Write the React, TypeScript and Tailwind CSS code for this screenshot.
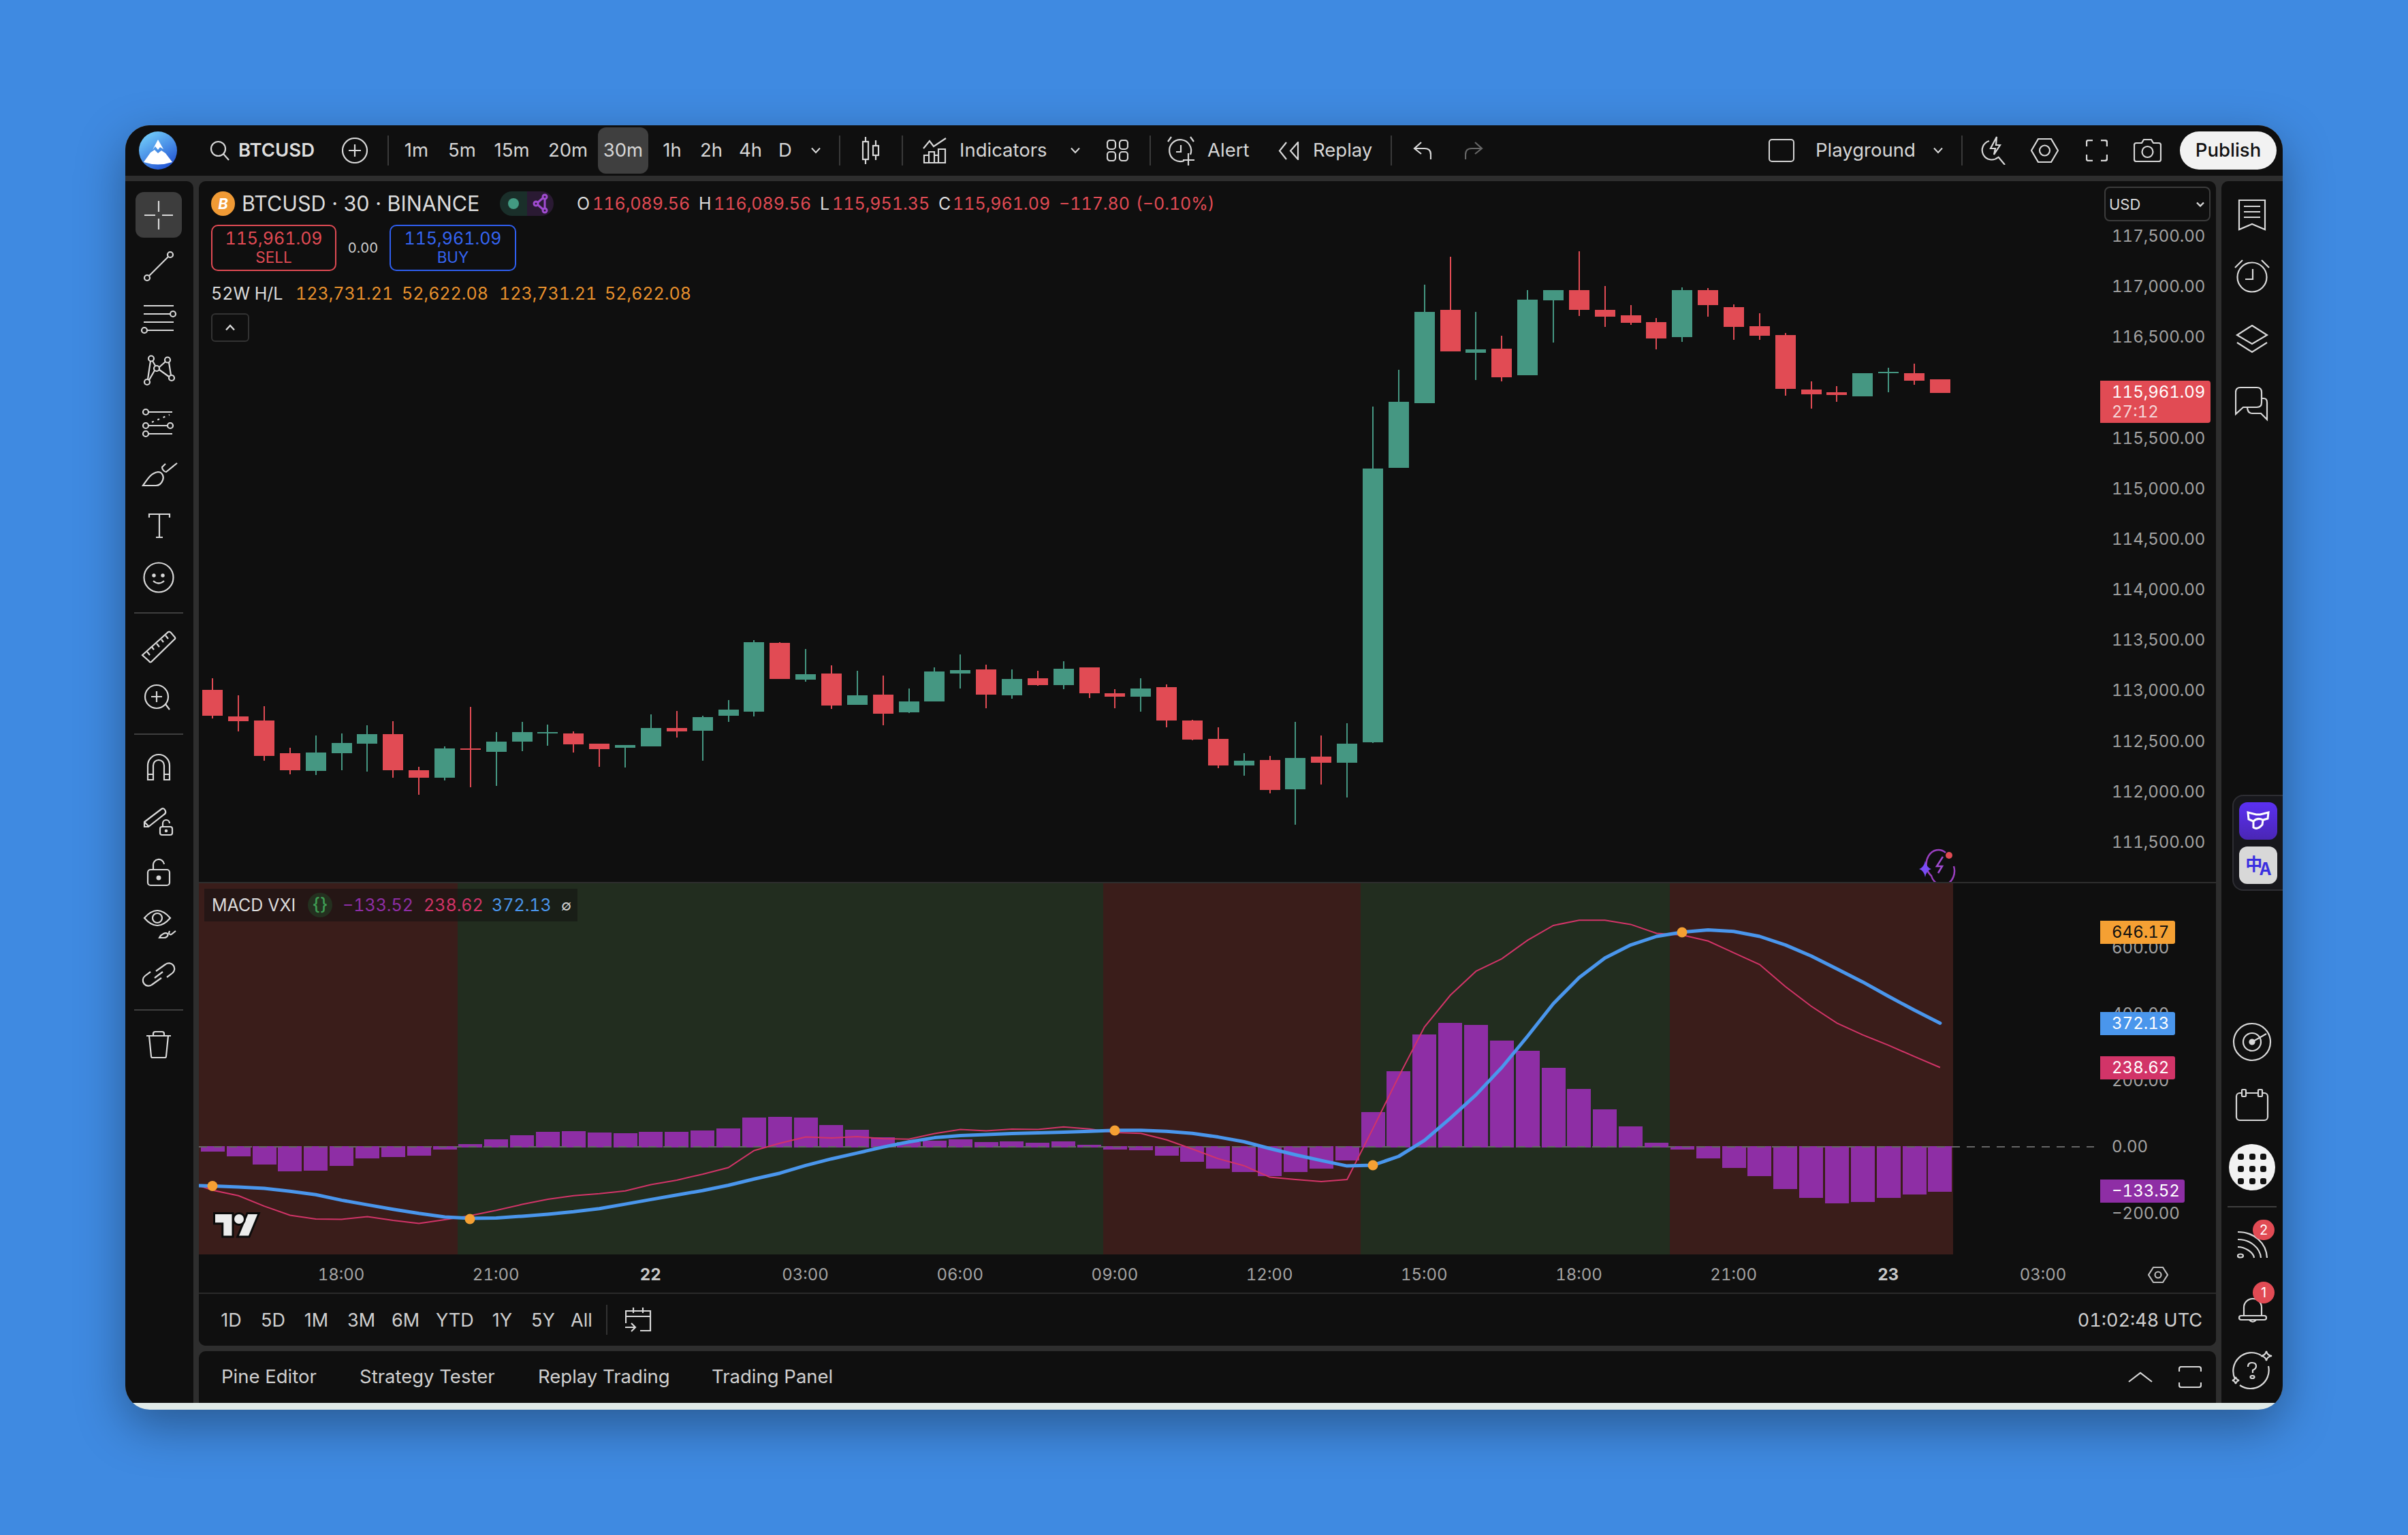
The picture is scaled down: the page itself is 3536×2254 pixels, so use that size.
import React from "react";

const CX = (i: number) => 312.3 + 37.86 * i;
const GREEN = "#459782";
const RED = "#e14b54";

// [green?, wickTop, bodyTop, bodyBottom, wickBottom]
const CANDLES: number[][] = [
  [0, 996, 1013, 1051, 1055], [0, 1021, 1052, 1059, 1074], [0, 1037, 1058, 1110, 1117], [0, 1098, 1106, 1131, 1137],
  [1, 1080, 1105, 1132, 1138], [1, 1077, 1091, 1106, 1131], [1, 1065, 1078, 1092, 1133], [0, 1059, 1078, 1131, 1142],
  [0, 1126, 1131, 1142, 1167], [1, 1096, 1099, 1142, 1146], [0, 1038, 1099, 1101, 1156], [1, 1075, 1089, 1104, 1154],
  [1, 1060, 1075, 1089, 1103], [1, 1064, 1075, 1077, 1095], [0, 1074, 1077, 1093, 1105], [0, 1092, 1092, 1100, 1126],
  [1, 1094, 1094, 1098, 1127], [1, 1049, 1069, 1096, 1096], [0, 1044, 1069, 1074, 1083], [1, 1051, 1053, 1073, 1117],
  [1, 1028, 1042, 1051, 1060], [1, 940, 943, 1045, 1052], [0, 943, 944, 997, 997], [1, 953, 990, 998, 1001],
  [0, 977, 989, 1036, 1041], [1, 985, 1021, 1035, 1035], [0, 992, 1020, 1048, 1065], [1, 1011, 1030, 1046, 1047],
  [1, 980, 986, 1030, 1030], [1, 961, 984, 989, 1011], [0, 976, 983, 1020, 1040], [1, 983, 997, 1021, 1026],
  [0, 985, 996, 1006, 1007], [1, 971, 982, 1006, 1012], [0, 980, 980, 1018, 1025], [0, 1012, 1018, 1023, 1040],
  [1, 996, 1011, 1023, 1045], [0, 1005, 1009, 1058, 1068], [0, 1057, 1058, 1086, 1087], [0, 1068, 1085, 1124, 1128],
  [1, 1106, 1117, 1124, 1139], [0, 1110, 1116, 1160, 1165], [1, 1060, 1113, 1159, 1211], [0, 1080, 1111, 1120, 1152],
  [1, 1062, 1092, 1120, 1171], [1, 597, 688, 1090, 1091], [1, 543, 590, 687, 687], [1, 418, 458, 592, 592],
  [0, 377, 455, 516, 516], [1, 458, 513, 518, 558], [0, 493, 512, 554, 560], [1, 426, 440, 551, 551],
  [1, 426, 426, 441, 503], [0, 369, 426, 455, 464], [0, 420, 455, 465, 480], [0, 448, 463, 474, 477],
  [0, 467, 473, 497, 513], [1, 422, 426, 495, 502], [0, 423, 426, 448, 465], [0, 447, 451, 480, 499],
  [0, 460, 479, 493, 499], [0, 489, 492, 571, 581], [0, 560, 572, 579, 600], [0, 567, 576, 580, 590],
  [1, 548, 548, 582, 582], [1, 540, 546, 548, 576], [0, 534, 548, 559, 565], [0, 557, 557, 577, 577],
];

const HIST = [
  1691, 1698, 1710, 1720, 1719, 1712, 1701, 1699, 1697, 1688, 1680, 1673, 1667, 1662, 1661, 1663, 1664, 1662, 1662, 1660,
  1657, 1641, 1640, 1641, 1652, 1659, 1670, 1677, 1675, 1673, 1677, 1676, 1678, 1676, 1681, 1688, 1689, 1697, 1706, 1716,
  1721, 1727, 1721, 1716, 1704, 1633, 1573, 1519, 1502, 1505, 1528, 1543, 1568, 1599, 1629, 1654, 1678, 1688, 1701, 1715,
  1727, 1746, 1759, 1767, 1765, 1759, 1754, 1750,
];

const BLUE_A = [885, 888, 892, 900, 910, 926, 939, 952, 964, 974, 978, 977, 972, 966, 959, 950, 937, 924, 911, 898, 883, 865, 848, 826, 807, 790, 773, 758, 746, 740, 737, 734, 732, 730];
const BLUE_B = [970, 966, 966, 970, 978, 992, 1010, 1036, 1060, 1082, 1103, 1100, 1066, 1005, 920, 830, 725, 605, 480, 380, 305, 255, 222, 206, 197, 203, 222, 255, 297, 347, 397, 452, 505, 555];
const RED_A = [897, 913, 943, 969, 980, 981, 973, 984, 993, 982, 970, 955, 938, 923, 913, 907, 899, 881, 868, 851, 832, 783, 762, 744, 747, 743, 749, 750, 734, 722, 726, 721, 722, 715];
const RED_B = [961, 975, 978, 1003, 1038, 1075, 1102, 1146, 1155, 1163, 1155, 960, 760, 570, 448, 356, 308, 237, 180, 160, 160, 176, 210, 217, 240, 285, 330, 415, 490, 555, 600, 640, 683, 725];

const line = (a: number[], b: number[], startY: number) => {
  const pts = [`292,${startY}`];
  a.forEach((v, i) => pts.push(`${CX(i).toFixed(1)},${(1290 + v / 1.96).toFixed(1)}`));
  b.forEach((v, i) => pts.push(`${CX(i + 34).toFixed(1)},${(1290 + v / 2.613).toFixed(1)}`));
  return pts.join(" ");
};

const Ic = ({ w = 56, h = 56, className = "", stroke = "#d9d9d9", sw = 2.2, children }: { w?: number; h?: number; className?: string; stroke?: string; sw?: number; children?: React.ReactNode }) => (
  <svg width={w} height={h} viewBox={`0 0 ${w} ${h}`} fill="none" stroke={stroke} strokeWidth={sw} className={"shrink-0 " + className}>
    {children}
  </svg>
);

const Sep = ({ className = "" }: { className?: string }) => <div className={"w-[2px] h-[44px] bg-[#3a3a3a] shrink-0 " + className} />;
const HSep = ({ className = "" }: { className?: string }) => <div className={"h-[2px] w-[72px] mx-auto bg-[#3f3f3f] shrink-0 " + className} />;
const Chev = ({ className = "" }: { className?: string }) => (
  <Ic w={16} h={10} sw={2} className={className}><path d="M2 1.5 L8 8 L14 1.5" /></Ic>
);

function TopBar() {
  const t = "text-[27.5px] text-[#d6d6d6] whitespace-nowrap text-center shrink-0 leading-none";
  return (
    <div className="h-[74px] bg-[#0f0f0f] flex items-center shrink-0">
      <svg width="56" height="56" viewBox="0 0 56 56" className="ml-[20px] shrink-0">
        <defs>
          <linearGradient id="lg" x1="0.2" y1="0" x2="0.8" y2="1">
            <stop offset="0" stopColor="#74d0fb" />
            <stop offset="1" stopColor="#1f4fd2" />
          </linearGradient>
        </defs>
        <circle cx="28" cy="28" r="28" fill="url(#lg)" />
        <path d="M28 12 L36 26 L31 23 L28 27 L24 22 L20 27 Z" fill="#fff" />
        <path d="M17 31 L23 27 L28 32 L33 28 L39 32 L49 45 Q28 52 7 45 Z" fill="#fff" />
      </svg>
      <Ic w={29} h={30} className="ml-[48px]"><circle cx="12.5" cy="12.5" r="10.5" /><path d="M20 20 L28 29" /></Ic>
      <span className="ml-[12px] w-[114px] text-[27.5px] font-semibold text-[#dedede] whitespace-nowrap text-center shrink-0 leading-none">BTCUSD</span>
      <Ic w={38} h={38} className="ml-[39px]"><circle cx="19" cy="19" r="18" /><path d="M19 10 V28 M10 19 H28" /></Ic>
      <Sep className="ml-[29px]" />
      <span className={t + " ml-[21px] w-[39px]"}>1m</span>
      <span className={t + " ml-[27px] w-[38px]"}>5m</span>
      <span className={t + " ml-[28px] w-[55px]"}>15m</span>
      <span className={t + " ml-[26px] w-[57px]"}>20m</span>
      <div className="ml-[16px] w-[74px] h-[68px] rounded-[12px] bg-[#3f3f3f] flex items-center justify-center shrink-0 text-[27.5px] text-[#d6d6d6] leading-none">30m</div>
      <span className={t + " ml-[20px] w-[30px]"}>1h</span>
      <span className={t + " ml-[26px] w-[32px]"}>2h</span>
      <span className={t + " ml-[25px] w-[32px]"}>4h</span>
      <span className={t + " ml-[26px] w-[18px]"}>D</span>
      <Chev className="ml-[29px]" />
      <Sep className="ml-[26px]" />
      <Ic w={27} h={40} className="ml-[31px]">
        <path d="M6 0 V7 M6 33 V40 M21 5 V13 M21 27 V34" />
        <rect x="2" y="7" width="8" height="26" />
        <rect x="17" y="13" width="8" height="14" />
      </Ic>
      <Sep className="ml-[32px]" />
      <Ic w={35} h={38} className="ml-[29px]">
        <path d="M1 16 L10 5 L16 13 L34 1" />
        <path d="M2 37 V26 H9 V37 M9 37 V21 H17 V37 M17 37 V26 H23 V37 M23 37 V17 H33 V37 H1" />
      </Ic>
      <span className={t + " ml-[19px] w-[126px]"}>Indicators</span>
      <Chev className="ml-[36px]" />
      <Ic w={32} h={32} className="ml-[38px]">
        <rect x="1" y="1" width="12" height="13" rx="4" /><rect x="19" y="1" width="12" height="13" rx="4" />
        <rect x="1" y="18" width="12" height="13" rx="4" /><rect x="19" y="18" width="12" height="13" rx="4" />
      </Ic>
      <Sep className="ml-[31px]" />
      <Ic w={42} h={44} className="ml-[23px]">
        <path d="M35 28 A16 16 0 1 0 26 37 " />
        <path d="M21 14 V24 H14" />
        <path d="M2 9 L7 2 M40 9 L35 2" />
        <path d="M32 26 V44 M24 36 H41" />
      </Ic>
      <span className={t + " ml-[18px] w-[59px]"}>Alert</span>
      <Ic w={31} h={27} className="ml-[45px]">
        <path d="M12 1 L2 13.5 L12 26" /><path d="M29 1 L18 13.5 L29 26 Z" />
      </Ic>
      <span className={t + " ml-[20px] w-[85px]"}>Replay</span>
      <Sep className="ml-[29px]" />
      <Ic w={27} h={26} className="ml-[31px]"><path d="M12 1 L2 10 L12 18 M2 10 H17 Q26 10 26 19 V26" /></Ic>
      <Ic w={27} h={26} className="ml-[49px]" stroke="#666666"><path d="M15 1 L25 10 L15 18 M25 10 H10 Q1 10 1 19 V26" /></Ic>
      <div className="ml-[419px] w-[38px] h-[34px] rounded-[5px] border-2 border-[#d6d6d6] shrink-0" />
      <span className={t + " ml-[31px] w-[143px]"}>Playground</span>
      <Chev className="ml-[29px]" />
      <Sep className="ml-[26px]" />
      <Ic w={36} h={42} className="ml-[27px]">
        <path d="M12 7 A14 14 0 1 0 25 31" />
        <path d="M23 1 L14 18 H21 L19 27 L28 13 H22 Z" />
        <path d="M25 30 L35 42" />
      </Ic>
      <Ic w={41} h={36} className="ml-[37px]">
        <path d="M11 1 H30 L40 18 L30 35 H11 L1 18 Z" /><circle cx="20.5" cy="18" r="7.5" />
      </Ic>
      <Ic w={32} h={32} className="ml-[40px]" sw={2.4}>
        <path d="M10 1 H4 Q1 1 1 4 V10 M22 1 H28 Q31 1 31 4 V10 M10 31 H4 Q1 31 1 28 V22 M22 31 H28 Q31 31 31 28 V22" />
      </Ic>
      <Ic w={41} h={34} className="ml-[38px]">
        <path d="M4 6 H12 L15 1 H26 L29 6 H37 Q40 6 40 9 V30 Q40 33 37 33 H4 Q1 33 1 30 V9 Q1 6 4 6 Z" /><circle cx="20.5" cy="19" r="8" />
      </Ic>
      <div className="ml-[27px] w-[142px] h-[56px] rounded-full bg-[#f2f2f2] flex items-center justify-center text-[27.5px] font-medium text-[#111111] leading-none shrink-0">Publish</div>
    </div>
  );
}

function LeftBar() {
  return (
    <div className="w-[100px] pr-[3px] bg-[#0f0f0f] rounded-tr-[10px] flex flex-col items-center shrink-0">
      <div className="mt-[16px] w-[68px] h-[67px] rounded-[12px] bg-[#3d3d3d] flex items-center justify-center shrink-0">
        <Ic><path d="M7 28 H23 M33 28 H49 M28 7 V23 M28 33 V49" /></Ic>
      </div>
      <Ic className="mt-[14px]"><circle cx="11" cy="45" r="4" /><circle cx="45" cy="11" r="4" /><path d="M14 42 L42 14" /></Ic>
      <Ic className="mt-[20px]"><path d="M6 10 H50 M6 22 H45 M6 34 H50 M11 46 H50" /><circle cx="49" cy="22" r="4" /><circle cx="7" cy="46" r="4" /></Ic>
      <Ic className="mt-[21px]">
        <circle cx="17" cy="10.5" r="4" /><circle cx="41" cy="12.5" r="4" /><circle cx="25" cy="25" r="4" /><circle cx="11" cy="45" r="4" /><circle cx="47" cy="39" r="4" />
        <path d="M16 14 L12 41 M19 14 L23 21 M29 23 L38 15 M43 16 L46 35 M29 27 L43 37 M22 28 L14 42" />
      </Ic>
      <Ic className="mt-[21px]">
        <circle cx="9" cy="12" r="4" /><circle cx="9" cy="32" r="4" /><circle cx="45" cy="32" r="4" /><circle cx="9" cy="44" r="4" />
        <path d="M13 12 H48 M13 32 H41 M13 44 H48" /><path d="M18 27 L44 16" strokeDasharray="3 6" />
      </Ic>
      <Ic className="mt-[20px]">
        <path d="M5 44 C12 34 16 26 27 24 C34 24 36 32 34 36 C32 41 28 44 24 44 Z" />
        <path d="M38 12 L33 17 C33 20 36 24 39 24 L55 11" />
      </Ic>
      <Ic className="mt-[19px]"><path d="M14 16 V11 H44 V16 M29 11 V45 M24 45 H34" /></Ic>
      <Ic className="mt-[20px]"><circle cx="28" cy="28" r="21.5" /><circle cx="21" cy="25" r="1.6" fill="#d9d9d9" /><circle cx="34" cy="25" r="1.6" fill="#d9d9d9" /><path d="M20 33 Q28 40 36 33" /></Ic>
      <HSep className="mt-[23px]" />
      <Ic className="mt-[20px]">
        <path d="M4 41 L42 7 Q44 6 46 8 L52 15 Q53 17 51 18 L17 51 Q15 52 14 50 Z" />
        <path d="M11 36 L15 41 M18 29 L21 33 M25 24 L29 29 M32 18 L35 22 M38 12 L42 17" />
      </Ic>
      <Ic className="mt-[18px]"><circle cx="25" cy="28" r="17" /><path d="M25 20 V36 M17 28 H33 M38 39 L44 47" /></Ic>
      <HSep className="mt-[26px]" />
      <Ic className="mt-[21px]"><path d="M12 45 V24 A16 16 0 0 1 44 24 V45 H36 V24 A8 8 0 0 0 20 24 V45 Z M12 37 H20 M36 37 H44" /></Ic>
      <Ic className="mt-[20px]">
        <path d="M7 31 L32 12 Q35 10 37 13 L38 15 Q39 18 36 20 L13 38 H7 Z M7 31 L14 38" />
        <rect x="30" y="38" width="18" height="12" rx="3" /><path d="M34 38 V33 A5 5 0 0 1 44 33" /><circle cx="39" cy="44" r="1.2" fill="#d9d9d9" />
      </Ic>
      <Ic className="mt-[22px]"><rect x="12" y="23" width="32" height="23" rx="4" /><path d="M20 23 V17 A8 8 0 0 1 36 15" /><circle cx="28" cy="35" r="2.4" fill="#d9d9d9" /></Ic>
      <Ic className="mt-[14px]">
        <path d="M7 24 Q26 2 45 24 Q26 46 7 24 Z" /><circle cx="26" cy="24" r="7" />
        <path d="M29 53 C32 47 38 45 41 47 C43 50 39 53 36 53 Z M44 43 L43 46 C44 49 46 49 48 47 L53 43" />
      </Ic>
      <Ic className="mt-[23px]">
        <path d="M24 23 L38 13 A8 8 0 0 1 48 26 L40 32" /><path d="M32 33 L18 43 A8 8 0 0 1 8 30 L16 24" /><path d="M22 33 L34 24" />
      </Ic>
      <HSep className="mt-[23px]" />
      <Ic className="mt-[22px]">
        <path d="M10 15 H46 M20 15 V12 Q20 9 23 9 H33 Q36 9 36 12 V15 M14 15 L17 45 Q17 47 19 47 H37 Q39 47 39 45 L42 15" />
      </Ic>
    </div>
  );
}

function RightBar() {
  return (
    <div className="w-[90px] bg-[#0f0f0f] rounded-tl-[10px] flex flex-col items-center shrink-0">
      <Ic w={42} h={47} className="mt-[26px]"><path d="M2 2 H40 V45 L21 37 L2 45 Z M9 11 H33 M9 19 H33 M9 27 H33" /></Ic>
      <Ic w={54} h={50} className="mt-[41px]"><circle cx="27" cy="27" r="21.5" /><path d="M28 15 V30 H17 M2 13 L13 2 M52 13 L41 2" /></Ic>
      <Ic w={50} h={42} className="mt-[47px]"><path d="M25 1 L47 15 L25 28 L3 15 Z M3 26 L25 40 L47 26" /></Ic>
      <Ic w={50} h={52} className="mt-[48px]">
        <path d="M1 41 V9 Q1 2 8 2 H32 Q39 2 39 9 V24 Q39 31 32 31 H12 Z" />
        <path d="M39 18 H42 Q47 18 47 24 V49 L38 40 H25 Q19 40 18 32" />
      </Ic>
      <div className="mt-[548px] self-end w-[74px] h-[141px] bg-[#17171c] border-2 border-r-0 border-[#2e2e33] rounded-l-[16px] flex flex-col justify-center pl-[8px] gap-[10px] shrink-0">
        <div className="w-[56px] h-[55px] rounded-[12px] bg-[linear-gradient(180deg,#5b30f2,#4a26b4)] flex items-center justify-center">
          <Ic w={34} h={30} stroke="#ffffff" sw={3}>
            <path d="M2 3 L14 6 H20 L32 3 L31 12 L24 14 L23 21 Q16 29 10 25 L10 16 L3 13 Z M10 16 Q16 10 24 14" />
          </Ic>
        </div>
        <div className="relative w-[56px] h-[55px] rounded-[12px] bg-[#d8d8d8] flex items-center justify-center text-[#3a2fe0] font-bold leading-none font-['Noto_Sans_CJK_SC',sans-serif]">
          <span className="text-[25px] -mt-[5px]">中</span>
          <span className="text-[26px] mt-[7px] -ml-[4px]">A</span>
        </div>
      </div>
      <Ic w={58} h={58} className="mt-[193px]">
        <circle cx="29" cy="29" r="27" /><circle cx="29" cy="29" r="13" /><circle cx="29" cy="29" r="3.5" fill="#d9d9d9" /><path d="M29 29 L50 17" />
      </Ic>
      <Ic w={50} h={50} className="mt-[38px]">
        <rect x="2" y="8" width="46" height="40" rx="5" />
        <rect x="10" y="3" width="6" height="10" rx="1" fill="#0f0f0f" /><rect x="34" y="3" width="6" height="10" rx="1" fill="#0f0f0f" />
      </Ic>
      <div className="mt-[33px] w-[68px] h-[68px] rounded-full bg-[#f2f2f2] grid grid-cols-3 gap-[9px] p-[14px] shrink-0 place-items-center">
        {[0, 1, 2, 3, 4, 5, 6, 7, 8].map((i) => (
          <div key={i} className="w-[9px] h-[9px] rounded-[3px] bg-[#111111]" />
        ))}
      </div>
      <HSep className="mt-[23px]" />
      <div className="relative mt-[18px] w-[66px] h-[57px] shrink-0">
        <Ic w={46} h={46} className="absolute left-[11px] top-[12px]">
          <path d="M1 6 C25 6 43 22 44 44 M1 17 C20 17 34 30 35 44 M1 28 C12 28 24 36 25 44" /><ellipse cx="5" cy="41" rx="4" ry="2.5" />
        </Ic>
        <div className="absolute right-0 top-0 w-[32px] h-[30px] rounded-full bg-[#e14b54] flex items-center justify-center text-[20px] text-white leading-none">2</div>
      </div>
      <div className="relative mt-[34px] w-[66px] h-[62px] shrink-0">
        <Ic w={46} h={48} className="absolute left-[11px] top-[14px]">
          <path d="M10 36 V24 A13 13 0 0 1 36 24 V36" /><rect x="3" y="36" width="40" height="6" rx="3" /><path d="M18 42 Q23 48 28 42" />
        </Ic>
        <div className="absolute right-0 top-0 w-[32px] h-[32px] rounded-full bg-[#e14b54] flex items-center justify-center text-[20px] text-white leading-none">1</div>
      </div>
      <Ic w={66} h={60} className="mt-[37px]">
        <path d="M46 9 A27 27 0 0 0 8 44" /><path d="M15 53 A27 27 0 0 0 57 25" />
        <path d="M27 26 Q27 20 33 20 Q39 20 39 25 Q39 29 34 31 V35" /><ellipse cx="33.500" cy="41" rx="3" ry="2" />
        <path d="M54 3 Q55 9 62 10 Q55 11 54 17 Q53 11 46 10 Q53 9 54 3 Z" />
        <path d="M9 41 Q10 45 14 46 Q10 47 9 51 Q8 47 4 46 Q8 45 9 41 Z" />
      </Ic>
    </div>
  );
}

function MainPlot() {
  return (
    <div className="relative w-[2792px] h-full shrink-0">
      <svg width="2792" height="1029" viewBox="292 266 2792 1029" className="absolute inset-0">
        {CANDLES.map((c, i) => {
          const x = CX(i);
          const col = c[0] ? GREEN : RED;
          return (
            <g key={i} fill={col} shapeRendering="crispEdges">
              <rect x={x - 1} y={c[1]} width={2} height={c[4] - c[1]} />
              <rect x={x - 15} y={c[2]} width={30} height={Math.max(c[3] - c[2], 2)} />
            </g>
          );
        })}
        <g fill="none" stroke="#9a3fc0" strokeWidth="2.5">
          <path d="M2857 1252 A17 20 0 0 0 2836 1286 A17 20 0 0 0 2869 1272" />
          <path d="M2853 1258 L2844 1272 H2852 L2846 1282" stroke="#a04bd0" />
        </g>
        <path d="M2827 1264 Q2829 1274 2836 1276 Q2829 1278 2827 1288 Q2825 1278 2818 1276 Q2825 1274 2827 1264 Z" fill="#7a4cf5" />
        <circle cx="2862" cy="1256" r="5" fill="#e14b54" />
      </svg>
      <div className="absolute inset-0 flex flex-col items-start pl-[18px] pt-[15px]">
        <div className="flex items-center h-[36px] text-[25px] whitespace-nowrap leading-none">
          <div className="w-[35px] h-[36px] rounded-full bg-[#f09a35] flex items-center justify-center text-white text-[22px] font-bold italic">B</div>
          <span className="ml-[10px] text-[30.5px] text-[#dcdcdc] w-[348px]">BTCUSD · 30 · BINANCE</span>
          <div className="ml-[31px] w-[79px] h-[36px] rounded-full overflow-hidden flex">
            <div className="w-[40px] bg-[#1a2f2a] flex items-center justify-center"><div className="w-[16px] h-[16px] rounded-full bg-[#439a82]" /></div>
            <div className="w-[39px] bg-[#2a1a33] flex items-center justify-center">
              <Ic w={24} h={30} stroke="#a04bd0" sw={3}><circle cx="18" cy="5" r="3" /><circle cx="5" cy="15" r="3" /><circle cx="18" cy="25" r="3" /><path d="M8 13 L15 7 M8 17 L15 23 M18 8 V22" /></Ic>
            </div>
          </div>
          <span className="ml-[34px] w-[23px] text-[#dcdcdc]">O</span>
          <span className="text-[#e14b54] tabular-nums w-[156px]">116,089.56</span>
          <span className="w-[22px] text-[#dcdcdc]">H</span>
          <span className="text-[#e14b54] tabular-nums w-[156px]">116,089.56</span>
          <span className="w-[18px] text-[#dcdcdc]">L</span>
          <span className="text-[#e14b54] tabular-nums w-[156px]">115,951.35</span>
          <span className="w-[21px] text-[#dcdcdc]">C</span>
          <span className="text-[#e14b54] tabular-nums w-[156px]">115,961.09</span>
          <span className="text-[#e14b54] tabular-nums w-[113px]">−117.80</span>
          <span className="text-[#e14b54] tabular-nums">(−0.10%)</span>
        </div>
        <div className="mt-[13px] flex items-center h-[68px] whitespace-nowrap">
          <div className="w-[184px] h-[68px] border-2 border-[#e14b54] rounded-[10px] flex flex-col items-center justify-center text-[#e14b54] leading-none">
            <span className="text-[25px] tabular-nums">115,961.09</span>
            <span className="text-[22.5px] mt-[4px]">SELL</span>
          </div>
          <span className="w-[78px] text-center text-[20px] text-[#cfcfcf] tabular-nums">0.00</span>
          <div className="w-[186px] h-[68px] border-2 border-[#2f5ff0] rounded-[10px] flex flex-col items-center justify-center text-[#3565f2] leading-none">
            <span className="text-[25px] tabular-nums">115,961.09</span>
            <span className="text-[22.5px] mt-[4px]">BUY</span>
          </div>
        </div>
        <div className="mt-[18px] flex items-center h-[30px] text-[25px] text-[#e8912d] tabular-nums whitespace-nowrap leading-none">
          <span className="text-[#dcdcdc] w-[124px]">52W H/L</span>
          <span className="w-[156px]">123,731.21</span>
          <span className="w-[143px]">52,622.08</span>
          <span className="w-[155px]">123,731.21</span>
          <span>52,622.08</span>
        </div>
        <div className="mt-[14px] w-[56px] h-[42px] border-2 border-[#333333] rounded-[6px] flex items-center justify-center">
          <Ic w={16} h={10} sw={2.4}><path d="M2 8.500 L8 2 L14 8.500" /></Ic>
        </div>
      </div>
    </div>
  );
}

function PriceAxis() {
  const prices = ["117,500.00", "117,000.00", "116,500.00", "", "115,500.00", "115,000.00", "114,500.00", "114,000.00", "113,500.00", "113,000.00", "112,500.00", "112,000.00", "111,500.00"];
  return (
    <div className="relative w-[170px] h-full shrink-0 pt-[44px] pl-[17px] text-[24px] tabular-nums text-[#a3a3a3] leading-none">
      {prices.map((p, i) => (
        <div key={i} className="h-[74.170px] flex items-center whitespace-nowrap">{p}</div>
      ))}
      <div className="absolute left-[6px] top-[8px] w-[156px] h-[51px] border-2 border-[#3c3c3c] rounded-[8px] flex items-center justify-between px-[5px] text-[22px] text-[#dcdcdc]">
        <span>USD</span>
        <Ic w={12} h={8} sw={2.4} className="mr-[2px]"><path d="M1 1.500 L6 6.500 L11 1.500" /></Ic>
      </div>
      <div className="absolute left-0 top-[293px] w-[162px] h-[62px] rounded-r-[4px] bg-[#e14b54] pl-[17px] flex flex-col justify-center gap-[5px]">
        <span className="text-white">115,961.09</span>
        <span className="text-[#f5d5d7]">27:12</span>
      </div>
    </div>
  );
}

function IndicatorPlot() {
  const regions: [number, number, string][] = [
    [292, 672, "#3a1d1a"], [672, 1620, "#222d1f"], [1620, 1998, "#3a1d1a"], [1998, 2452, "#222d1f"], [2452, 2868, "#3a1d1a"],
  ];
  const dots: [number, number][] = [[312, 1741.500], [690, 1790], [1637, 1660], [2016, 1711], [2470, 1369]];
  return (
    <div className="relative w-[2792px] h-full shrink-0">
      <svg width="2792" height="545" viewBox="292 1297 2792 545" className="absolute inset-0">
        {regions.map((r) => (
          <rect key={r[0]} x={r[0]} y={1297} width={r[1] - r[0]} height={545} fill={r[2]} />
        ))}
        {HIST.map((v, i) => (
          <rect key={i} x={CX(i) - 17.500} width={35} y={v < 1684 ? v : 1683} height={v < 1684 ? 1685 - v : v - 1683} fill="#8e2ea5" shapeRendering="crispEdges" />
        ))}
        <line x1="292" x2="3075" y1="1684" y2="1684" stroke="#666666" strokeWidth="2" strokeDasharray="12 10" />
        <polyline points={line(RED_A, RED_B, 1741)} fill="none" stroke="#d23468" strokeWidth="2" />
        <polyline points={line(BLUE_A, BLUE_B, 1741)} fill="none" stroke="#4a96ec" strokeWidth="5" strokeLinejoin="round" strokeLinecap="round" />
        {dots.map((d) => (
          <circle key={d[0]} cx={d[0]} cy={d[1]} r={7.500} fill="#f5a033" />
        ))}
        <g transform="translate(316 1776) scale(1.75)" fill="#ececec" stroke="#0b0b0b" strokeWidth="3.4" paintOrder="stroke">
          <path d="M14 22H7V11H0V4h14v18z" />
          <path d="M28 22h-8l7.500-18h8L28 22z" />
          <circle cx="20" cy="8" r="4" />
        </g>
      </svg>
      <div className="absolute left-[8px] top-[8px] w-[548px] h-[48px] bg-[#0f0f0f]/50 flex items-center pl-[11px] text-[25px] leading-none whitespace-nowrap">
        <span className="text-[#dcdcdc] w-[141px]">MACD VXI</span>
        <div className="w-[36px] h-[36px] rounded-full bg-[#24301f] flex items-center justify-center text-[#3f9c52] text-[26px] font-medium pb-[2px]">{"{}"}</div>
        <span className="ml-[15px] w-[119px] text-[#8e2ea5] tabular-nums">−133.52</span>
        <span className="w-[100px] text-[#d23468] tabular-nums">238.62</span>
        <span className="w-[102px] text-[#4a96ec] tabular-nums">372.13</span>
        <span className="text-[#cfcfcf] text-[22px]">∅</span>
      </div>
    </div>
  );
}

function IndicatorAxis() {
  const labels = ["600.00", "400.00", "200.00", "0.00", "−200.00"];
  const tag = "absolute left-0 h-[34px] rounded-r-[3px] pl-[17px] flex items-center whitespace-nowrap";
  return (
    <div className="relative w-[170px] h-full shrink-0 pt-[45.750px] pl-[17px] text-[24px] tabular-nums text-[#a3a3a3] leading-none">
      {labels.map((p) => (
        <div key={p} className="h-[97.500px] flex items-center whitespace-nowrap">{p}</div>
      ))}
      <div className={tag + " top-[55px] w-[110px] bg-[#f5a033] text-[#111111]"}>646.17</div>
      <div className={tag + " top-[189px] w-[110px] bg-[#4a96ec] text-white"}>372.13</div>
      <div className={tag + " top-[254px] w-[110px] bg-[#d23468] text-white"}>238.62</div>
      <div className={tag + " top-[435px] w-[124px] bg-[#8e2ea5] text-white"}>−133.52</div>
    </div>
  );
}

function TimeAxis() {
  const labels: [string, boolean][] = [["18:00", false], ["21:00", false], ["22", true], ["03:00", false], ["06:00", false], ["09:00", false], ["12:00", false], ["15:00", false], ["18:00", false], ["21:00", false], ["23", true], ["03:00", false]];
  return (
    <div className="h-[56px] pt-[3px] flex items-center pl-[95.400px] text-[24px] text-[#a3a3a3] leading-none shrink-0">
      {labels.map((l, i) => (
        <div key={i} className={"w-[227.200px] text-center shrink-0 tabular-nums " + (l[1] ? "font-bold text-[#c8c8c8]" : "")}>{l[0]}</div>
      ))}
      <Ic w={30} h={26} className="ml-[40px]" stroke="#bdbdbd"><path d="M8 2 H22 L29 13 L22 24 H8 L1 13 Z" /><circle cx="15" cy="13" r="4.500" /></Ic>
    </div>
  );
}

function RangeBar() {
  const t = "whitespace-nowrap text-center shrink-0";
  return (
    <div className="h-[76px] bg-[#0f0f0f] flex items-center text-[27px] text-[#d0d0d0] leading-none rounded-b-[10px] shrink-0">
      <span className={t + " ml-[31px] w-[33px]"}>1D</span>
      <span className={t + " ml-[27px] w-[36px]"}>5D</span>
      <span className={t + " ml-[26px] w-[39px]"}>1M</span>
      <span className={t + " ml-[26px] w-[39px]"}>3M</span>
      <span className={t + " ml-[26px] w-[40px]"}>6M</span>
      <span className={t + " ml-[25px] w-[53px]"}>YTD</span>
      <span className={t + " ml-[29px] w-[31px]"}>1Y</span>
      <span className={t + " ml-[27px] w-[32px]"}>5Y</span>
      <span className={t + " ml-[26px] w-[31px]"}>All</span>
      <div className="ml-[21px] w-[2px] h-[44px] bg-[#333333] shrink-0" />
      <Ic w={40} h={38} className="ml-[26px]">
        <path d="M1 24 V6 H37 V35 H22 M1 14 H37 M12 1 V9 M26 1 V9" /><path d="M0 30 H14 M9 24 L15 30 L9 36" />
      </Ic>
      <span className="ml-auto mr-[20px] text-[27px] tabular-nums whitespace-nowrap">01:02:48 UTC</span>
    </div>
  );
}

function BottomPanel() {
  const t = "whitespace-nowrap shrink-0";
  return (
    <div className="h-[76px] bg-[#0f0f0f] rounded-t-[10px] flex items-center text-[27.5px] text-[#d0d0d0] leading-none shrink-0">
      <span className={t + " ml-[33px] w-[138px]"}>Pine Editor</span>
      <span className={t + " ml-[65px] w-[197px]"}>Strategy Tester</span>
      <span className={t + " ml-[65px] w-[189px]"}>Replay Trading</span>
      <span className={t + " ml-[66px] w-[173px]"}>Trading Panel</span>
      <Ic w={36} h={16} className="ml-auto"><path d="M1 15 L18 2 L35 15" /></Ic>
      <Ic w={34} h={32} className="ml-[38px] mr-[21px]">
        <path d="M8 1 H30 Q33 1 33 4 V8 M33 24 V28 Q33 31 30 31 H4 Q1 31 1 28 V24 M1 8 V4 Q1 1 4 1 H8" />
      </Ic>
    </div>
  );
}

export default function App() {
  return (
    <div className="w-[3536px] h-[2254px] bg-[#3f8ae1] pt-[184px] pl-[184px] font-['Inter',sans-serif]">
      <div className="w-[3168px] h-[1886px] rounded-[36px] bg-[#e0eae8] overflow-hidden shadow-[0_24px_70px_rgba(0,0,0,0.35)]">
        <div className="w-[3168px] h-[1876px] bg-[#2e2e2e] flex flex-col">
          <TopBar />
          <div className="h-[8px] shrink-0" />
          <div className="flex flex-1 min-h-0">
            <LeftBar />
            <div className="w-[2962px] ml-[8px] mr-[8px] flex flex-col shrink-0">
              <div className="h-[1710px] bg-[#0f0f0f] rounded-[10px] flex flex-col shrink-0">
                <div className="h-[1029px] flex shrink-0">
                  <MainPlot />
                  <PriceAxis />
                </div>
                <div className="h-[2px] bg-[#2e2e2e] shrink-0" />
                <div className="h-[545px] flex shrink-0">
                  <IndicatorPlot />
                  <IndicatorAxis />
                </div>
                <TimeAxis />
                <div className="h-[2px] bg-[#2a2a2a] shrink-0" />
                <RangeBar />
              </div>
              <div className="h-[8px] shrink-0" />
              <BottomPanel />
            </div>
            <RightBar />
          </div>
        </div>
      </div>
    </div>
  );
}
